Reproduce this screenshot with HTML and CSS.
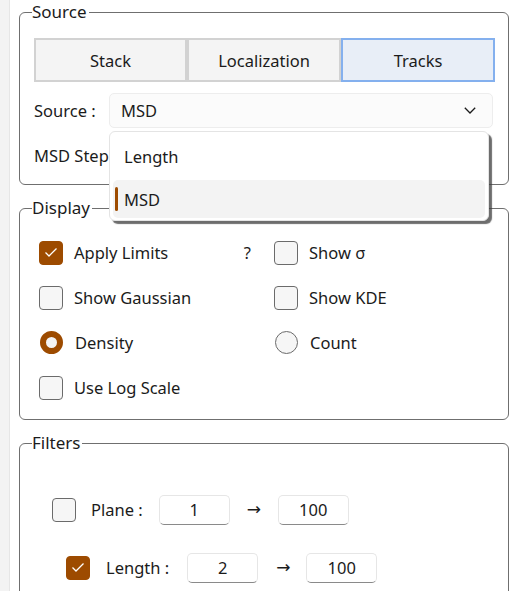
FILE: index.html
```html
<!DOCTYPE html>
<html lang="en">
<head>
<meta charset="utf-8">
<title>Tracks panel</title>
<link rel="stylesheet" href="styles.css">
</head>
<body>
<div class="panel">
  <fieldset class="group group-source">
    <legend>Source</legend>
    <div class="seg">
      <button class="seg-btn">Stack</button>
      <button class="seg-btn">Localization</button>
      <button class="seg-btn active">Tracks</button>
    </div>
    <div class="row source-row">
      <span class="row-label">Source :</span>
      <div class="combo-wrap">
        <div class="combo">
          <span>MSD</span>
          <svg class="chev" width="12" height="7" viewBox="0 0 12 7"><polyline points="0.8,0.8 6,6 11.2,0.8" fill="none" stroke="#1b1b1b" stroke-width="1.3"/></svg>
        </div>
        <div class="popup">
          <div class="item">Length</div>
          <div class="item selected"><span class="accent"></span>MSD</div>
        </div>
      </div>
    </div>
    <div class="row">
      <span class="row-label">MSD Step</span>
    </div>
  </fieldset>

  <fieldset class="group group-display">
    <legend>Display</legend>
    <div class="opts">
      <div class="opt first">
        <span class="cb checked"><svg width="24" height="24" viewBox="0 0 24 24"><polyline points="6.5,12.5 10,16 17.5,8.5" fill="none" stroke="#fff" stroke-width="1.3"/></svg></span>
        <span class="lbl">Apply Limits</span>
        <span class="help">?</span>
      </div>
      <div class="opt"><span class="cb"></span><span class="lbl">Show σ</span></div>
      <div class="opt"><span class="cb"></span><span class="lbl">Show Gaussian</span></div>
      <div class="opt"><span class="cb"></span><span class="lbl">Show KDE</span></div>
      <div class="opt"><span class="radio checked"></span><span class="lbl rlbl">Density</span></div>
      <div class="opt"><span class="radio"></span><span class="lbl rlbl">Count</span></div>
      <div class="opt"><span class="cb"></span><span class="lbl">Use Log Scale</span></div>
    </div>
  </fieldset>

  <fieldset class="group group-filters">
    <legend>Filters</legend>
    <div class="frow">
      <span class="cb"></span>
      <span class="flbl">Plane :</span>
      <span class="num">1</span>
      <span class="arrow">→</span>
      <span class="num">100</span>
    </div>
    <div class="frow indent">
      <span class="cb checked"><svg width="24" height="24" viewBox="0 0 24 24"><polyline points="6.5,12.5 10,16 17.5,8.5" fill="none" stroke="#fff" stroke-width="1.3"/></svg></span>
      <span class="flbl">Length :</span>
      <span class="num">2</span>
      <span class="arrow">→</span>
      <span class="num">100</span>
    </div>
  </fieldset>
</div>
</body>
</html>
```

FILE: styles.css
```css
html, body {
  margin: 0;
  padding: 0;
}
body {
  background: #f3f3f3;
  font-family: "Noto Sans", "Open Sans", sans-serif;
  font-size: 16px;
  color: #1b1b1b;
  height: 591px;
  overflow: hidden;
}
.panel {
  margin-left: 9px;
  border-left: 1px solid #e6e6e6;
  background: #fff;
  height: 591px;
  padding: 1px 9px 0 9px;
  box-sizing: border-box;
  overflow: hidden;
}
.group {
  margin: 0 0 12px 0;
  border: 1px solid #6f6f6f;
  border-radius: 6px;
  padding: 0 13px 0 14px;
  min-width: 0;
}
.group legend {
  margin-left: -2px;
  padding: 0 2px 0 0;
  line-height: 22px;
  font-size: 17px;
}
.group-source {
  padding-top: 15px;
  padding-bottom: 6px;
}
.seg {
  display: grid;
  grid-template-columns: 153px 154px 154px;
}
.seg-btn {
  height: 44px;
  font: inherit;
  font-size: 16.5px;
  color: #1b1b1b;
  background: #f4f4f4;
  border: 2px solid #d2d2d2;
  border-radius: 0;
  padding: 0;
}
.seg-btn.active {
  background: #e8eef7;
  border-color: #84b0ee;
}
.row {
  display: flex;
  align-items: center;
  height: 46px;
}
.source-row {
  margin-top: 11px;
  height: 35px;
}
.source-row + .row {
  margin-top: 4px;
}
.row-label {
  width: 75px;
  flex: none;
  font-size: 16.5px;
  white-space: nowrap;
}
.combo-wrap {
  position: relative;
  width: 384px;
}
.combo {
  height: 33px;
  background: #fbfbfb;
  border: 1px solid #ededed;
  border-radius: 5px;
  display: flex;
  align-items: center;
  padding: 0 16px 0 11px;
  font-size: 16.5px;
}
.combo span {
  flex: 1;
}
.popup {
  position: absolute;
  left: 0;
  top: 38px;
  width: 380px;
  box-sizing: border-box;
  background: #fff;
  border: 1px solid #e4e4e4;
  border-radius: 6px;
  box-shadow: 3px 3px 1px rgba(60, 60, 60, 0.75);
  padding: 5px 3px 2px 3px;
  z-index: 5;
}
.item {
  height: 38px;
  display: flex;
  align-items: center;
  padding-left: 11px;
  border-radius: 5px;
  font-size: 16.5px;
  position: relative;
}
.item + .item {
  margin-top: 5px;
}
.item.selected {
  background: #f3f3f3;
}
.accent {
  position: absolute;
  left: 2px;
  top: 7px;
  width: 3px;
  height: 24px;
  border-radius: 2px;
  background: #9d4b00;
}
.group-display {
  padding-top: 11px;
  padding-bottom: 9px;
}
.opts {
  display: grid;
  grid-template-columns: 235px 1fr;
  grid-auto-rows: 45px;
  margin-left: 5px;
}
.opt {
  display: flex;
  align-items: center;
}
.cb {
  width: 24px;
  height: 24px;
  box-sizing: border-box;
  border: 1.5px solid #6b6b6b;
  border-radius: 4px;
  background: #f6f6f6;
  flex: none;
  display: flex;
}
.cb.checked {
  background: #9d4b00;
  border-color: #9d4b00;
}
.cb svg {
  margin: -1.5px;
}
.lbl {
  margin-left: 11px;
  font-size: 16.5px;
}
.rlbl {
  margin-left: 12px;
}
.help {
  margin-left: auto;
  margin-right: 23px;
  font-size: 16.5px;
}
.radio {
  width: 23px;
  height: 23px;
  box-sizing: border-box;
  border-radius: 50%;
  border: 1.5px solid #6b6b6b;
  background: #f6f6f6;
  flex: none;
  margin-left: 1px;
}
.radio.checked {
  border: 6px solid #9d4b00;
  background: #f4f4f4;
}
.group-filters {
  padding-top: 40px;
  padding-bottom: 40px;
}
.frow {
  display: flex;
  align-items: center;
  height: 31px;
  margin-left: 18px;
}
.frow + .frow {
  margin-top: 27px;
}
.frow.indent {
  padding-left: 14px;
}
.flbl {
  margin-left: 15px;
  margin-right: 16px;
  font-size: 16.5px;
}
.frow.indent .flbl {
  margin-left: 16px;
  margin-right: 18px;
}
.num {
  width: 71px;
  height: 30px;
  box-sizing: border-box;
  border: 1px solid #e6e6e6;
  border-bottom-color: #8a8a8a;
  border-radius: 5px;
  background: #fff;
  display: flex;
  align-items: center;
  justify-content: center;
  font-size: 16.5px;
}
.arrow {
  width: 14px;
  margin: 0 17px;
  text-align: center;
  font-family: "DejaVu Sans", sans-serif;
  font-size: 17px;
  line-height: 1;
}
.frow.indent .arrow {
  width: 12px;
  margin: 0 18px;
}
```
